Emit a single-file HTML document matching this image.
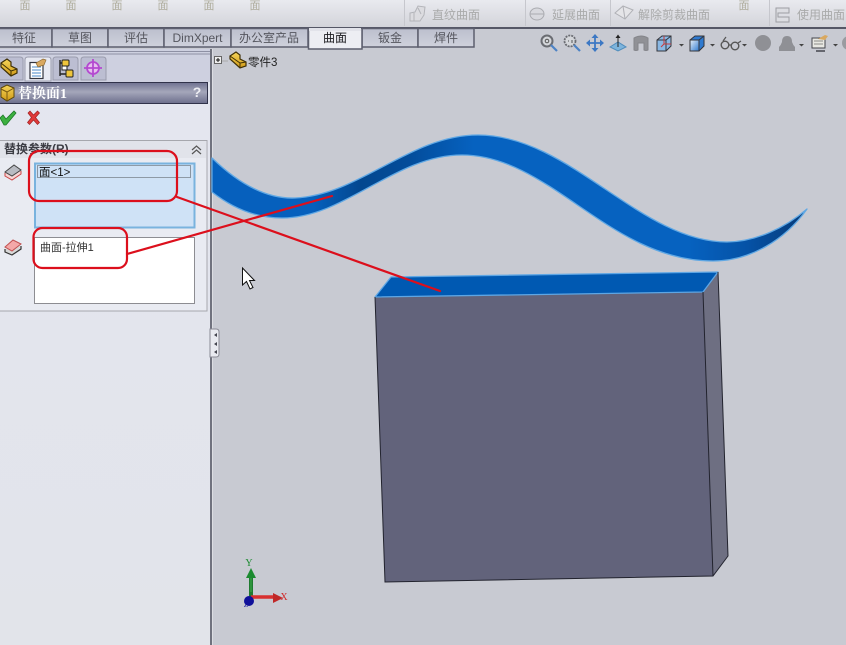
<!DOCTYPE html>
<html><head><meta charset="utf-8"><style>
html,body{margin:0;padding:0;background:#c8cad2}
svg{display:block}
text{font-family:"Liberation Sans","Noto Sans CJK SC",sans-serif}
</style></head><body>
<svg width="846" height="645" viewBox="0 0 846 645" xmlns="http://www.w3.org/2000/svg">
<defs>
<linearGradient id="tb" x1="0" y1="0" x2="0" y2="1"><stop offset="0" stop-color="#e9eaef"/><stop offset="1" stop-color="#d3d4da"/></linearGradient>
<linearGradient id="title" x1="0" y1="0" x2="0" y2="1"><stop offset="0" stop-color="#6f7190"/><stop offset=".45" stop-color="#a5a7ba"/><stop offset="1" stop-color="#6c6e8c"/></linearGradient>
<linearGradient id="tab" x1="0" y1="0" x2="0" y2="1"><stop offset="0" stop-color="#bcbfcd"/><stop offset="1" stop-color="#cfd1dc"/></linearGradient>
<linearGradient id="panel" x1="0" y1="0" x2="0" y2="1"><stop offset="0" stop-color="#e4e6f0"/><stop offset="1" stop-color="#e2e4ea"/></linearGradient>
<linearGradient id="surf" gradientUnits="userSpaceOnUse" x1="212" y1="0" x2="807" y2="0">
<stop offset="0" stop-color="#0660bd"/><stop offset=".17" stop-color="#0660bd"/><stop offset=".25" stop-color="#03478f"/><stop offset=".33" stop-color="#034c9a"/><stop offset=".44" stop-color="#0662c0"/><stop offset=".8" stop-color="#0662c0"/><stop offset=".9" stop-color="#0552a6"/><stop offset="1" stop-color="#063a78"/></linearGradient>
<linearGradient id="yel" x1="0" y1="0" x2="0" y2="1"><stop offset="0" stop-color="#f5d55a"/><stop offset="1" stop-color="#d09a18"/></linearGradient>
<linearGradient id="cube" x1="0" y1="0" x2="1" y2="1"><stop offset="0" stop-color="#e8f0f8"/><stop offset="1" stop-color="#2f7ad0"/></linearGradient>
</defs>

<!-- graphics background -->
<rect width="846" height="645" fill="#c8cad2"/>

<!-- top toolbar -->
<rect width="846" height="27" fill="url(#tb)"/>
<rect y="27" width="846" height="2" fill="#555766"/>
<g font-size="11" fill="#aeac9c" text-anchor="middle">
<text x="25" y="9">面</text><text x="71" y="9">面</text><text x="117" y="9">面</text><text x="163" y="9">面</text><text x="209" y="9">面</text><text x="255" y="9">面</text><text x="744" y="9">面</text>
</g>
<g stroke="#c6c7cd" stroke-width="1"><path d="M404.500 0V26M525.500 0V26M610.500 0V26M769.500 0V26"/></g>
<g font-size="12" fill="#a9aaaa">
<text x="432" y="19">直纹曲面</text><text x="552" y="19">延展曲面</text><text x="638" y="19">解除剪裁曲面</text><text x="797" y="19">使用曲面</text>
</g>
<!-- disabled toolbar icons -->
<path d="M410 21V13l5-1 3-6 7 1-1 8-4 6z" fill="#dcdce0" stroke="#b3b4b9"/>
<path d="M414 13v8M418 8l3 6" stroke="#b3b4b9" fill="none"/>
<ellipse cx="537" cy="14" rx="7" ry="6" fill="#d8d9de" stroke="#aaabb0"/><path d="M530 14h14" stroke="#aaabb0"/>
<path d="M615 13l8-7 10 4-8 9z" fill="#e5e5e8" stroke="#b0b1b6"/><path d="M623 6l2 13" stroke="#b0b1b6"/>
<path d="M776 8h13v5h-11v4h11v5h-13z" fill="#dcdde2" stroke="#9c9da3"/>

<!-- tabs -->
<g stroke="#5d5f6e" stroke-width="1.500" fill="url(#tab)">
<rect x="-2" y="28.500" width="54" height="18.500"/><rect x="52" y="28.500" width="56" height="18.500"/><rect x="108" y="28.500" width="56" height="18.500"/><rect x="164" y="28.500" width="67" height="18.500"/><rect x="231" y="28.500" width="77" height="18.500"/><rect x="362" y="28.500" width="56" height="18.500"/><rect x="418" y="28.500" width="56" height="18.500"/>
</g>
<path d="M308.500 29V49H362V29" fill="#edeef3" stroke="#5d5f6e" stroke-width="1.500"/>
<rect x="309" y="28" width="52" height="3" fill="#e2e3ea"/>
<g font-size="12" fill="#55565e" text-anchor="middle">
<text x="24" y="42">特征</text><text x="80" y="42">草图</text><text x="136" y="42">评估</text><text x="197.500" y="42">DimXpert</text><text x="269" y="42">办公室产品</text><text x="390" y="42">钣金</text><text x="446" y="42">焊件</text>
</g>
<text x="335" y="42" font-size="12" fill="#1c1c20" text-anchor="middle">曲面</text>

<!-- left panel -->
<rect x="0" y="49" width="210" height="596" fill="url(#panel)"/>
<rect x="0" y="49" width="210" height="33" fill="#ced0e0"/>
<path d="M0 51.500H210M0 54H210" stroke="#8e90a4" stroke-width="1"/>
<rect x="210" y="49" width="2" height="596" fill="#70727e"/>
<rect x="212" y="49" width="1" height="596" fill="#dcdde2"/>

<!-- panel tabs -->
<g stroke="#9a9cad" fill="#bcbed2">
<path d="M-2 80V60q0-3 3-3H20q3 0 3 3V80z"/>
<path d="M53 80V60q0-3 3-3H75q3 0 3 3V80z"/>
<path d="M81 80V60q0-3 3-3H103q3 0 3 3V80z"/>
</g>
<path d="M25 81V60q0-3 3-3H48q3 0 3 3V81z" fill="#e7e9f2" stroke="#9a9cad"/>
<!-- feature tree icon -->
<path d="M1 63L7 59L11 62L11 66L17 69L17 73L11 76L1 67Z" fill="url(#yel)" stroke="#3f3006" stroke-width="1.200"/>
<path d="M11 76V71L17 69M1 63L11 71" fill="none" stroke="#3f3006"/>
<!-- property icon -->
<rect x="30" y="62.500" width="13" height="16" fill="#fff" stroke="#33353f" stroke-width="1.200"/>
<path d="M32 67h9M32 70h9M32 73h9M32 76h9" stroke="#4a8ac8"/>
<path d="M36 63l7-4 3 1-2 5-6 2z" fill="#d9a860" stroke="#8d6a32" stroke-width=".7"/>
<!-- config icon -->
<path d="M60 60V76M60 63h3M60 74h6" stroke="#222" fill="none" stroke-width="1.400"/>
<rect x="62" y="60" width="7" height="6" rx="1" fill="#eec53c" stroke="#222"/><rect x="66" y="70" width="7" height="7" rx="1" fill="#eec53c" stroke="#222"/><rect x="62" y="66" width="5" height="4" fill="#fff" stroke="#222"/>
<!-- target icon -->
<circle cx="93" cy="68" r="6" fill="#e6bfee" stroke="#b44ad0" stroke-width="1.800"/>
<path d="M93 59V77M84 68H102" stroke="#b44ad0" stroke-width="1.800"/>

<!-- title bar -->
<rect x="-2" y="82.500" width="209.500" height="21" fill="url(#title)" stroke="#30324a"/>
<path d="M1 88l6-3 7 3v9l-7 4-6-4z" fill="url(#yel)" stroke="#5a4508"/>
<path d="M1 89l6 3 7-4M7 92v9" stroke="#7a5a10" fill="none"/>
<text x="18" y="98" font-size="14" font-weight="bold" fill="#fff" style="font-family:'Liberation Serif','Noto Serif CJK SC',serif">替换面1</text>
<text x="197" y="97" font-size="14" font-weight="bold" fill="#eeeef3" text-anchor="middle">?</text>

<!-- ok / cancel -->
<path d="M0 118L3 115L6 119L14 111L16 113L6 125H4Z" fill="#3cb040" stroke="#1d7a28" stroke-width=".8"/>
<path d="M28 113l2-2 3.500 4 4-4 2 2-4 4.500 4 5-2 2-4-4.500-4 4.500-2-2 4-5z" fill="#e03a3a" stroke="#a02020" stroke-width=".7"/>

<!-- group box -->
<rect x="-2" y="140.500" width="209" height="170.500" fill="#e9ebf2" stroke="#a6a7ad"/>
<rect x="-1" y="141" width="207" height="17" fill="#e1e3ea"/>
<text x="4" y="153" font-size="12" font-weight="bold" fill="#3c3d44">替换参数(R)</text>
<path d="M192 150l4.500-4 4.500 4M192 154l4.500-4 4.500 4" fill="none" stroke="#555" stroke-width="1.200"/>

<!-- selection boxes -->
<rect x="35" y="163.500" width="159.500" height="64" fill="#cfe2f6" stroke="#79b3de" stroke-width="2"/>
<rect x="37.500" y="165.500" width="153" height="12" fill="none" stroke="#222" stroke-width=".8" stroke-dasharray="1 1"/>
<text x="39" y="176" font-size="11.500" fill="#111">面&lt;1&gt;</text>
<rect x="34.500" y="237.500" width="160" height="66" fill="#fff" stroke="#8d8d92"/>
<text x="40" y="251" font-size="11" fill="#333">曲面-拉伸1</text>
<!-- selection icons -->
<path d="M5 173v3l7 4 9-6v-3" fill="#f6d6d6" stroke="#cc4444"/>
<path d="M5 172l9-7 7 5-9 6z" fill="#b9bbc2" stroke="#444"/>
<path d="M5 249v3l7 3 9-6v-3" fill="#d8d8d8" stroke="#333" stroke-width="1.200"/>
<path d="M5 247l8-7 8 4-9 7z" fill="#f4a8a8" stroke="#c05050"/>

<!-- collapse handle -->
<path d="M210 329h6q3 0 3 3v22q0 3-3 3h-6z" fill="#e9eaf0" stroke="#8a8b95"/>
<path d="M217 333l-3 2 3 2zM217 342l-3 2 3 2zM217 350l-3 2 3 2z" fill="#44454f"/>

<!-- tree root -->
<path d="M222 61h6" stroke="#aaa"/>
<rect x="214.500" y="56.500" width="7" height="7" fill="#eee" stroke="#666"/>
<path d="M216 60h4M218 58v4" stroke="#111"/>
<path d="M230 56L236 52L240 55L240 59L246 62L246 66L240 68L230 59Z" fill="url(#yel)" stroke="#3f3006" stroke-width="1.200"/>
<path d="M240 68V63L246 62M230 56L240 63" fill="none" stroke="#3f3006"/>
<text x="248" y="66" font-size="11.500" fill="#222">零件3</text>

<!-- view toolbar -->
<g>
<circle cx="547" cy="41" r="5.500" fill="#d4d6da" stroke="#6a6c72" stroke-width="2"/><circle cx="547" cy="41" r="1.800" fill="none" stroke="#555"/><path d="M551 45l6 6" stroke="#4d82c4" stroke-width="2.200"/>
<circle cx="570" cy="41" r="5.500" fill="#d4d6da" stroke="#6a6c72" stroke-width="1.800" stroke-dasharray="2 1"/><path d="M568 41h1M572 40v3" stroke="#555"/><path d="M574 45l6 6" stroke="#4d82c4" stroke-width="2.200"/>
<path d="M595 36v14M588 43h14" stroke="#3c78c4" stroke-width="1.800"/><path d="M595 34l-3.500 4h7zM595 52l-3.500-4h7zM586 43l4-3.500v7zM604 43l-4-3.500v7z" fill="#3c78c4"/>
<path d="M610 47l8-5 8 5-8 4z" fill="#7db4dc" stroke="#4f8cbc"/><path d="M618 47V36" stroke="#222"/><path d="M618 34.500l-2.500 3.500h5z" fill="#222"/>
<path d="M634 38q7-4 14 0v12q-2 1-4 0v-7h-6v7q-2 1-4 0z" fill="#909196" stroke="#84858a"/>
<path d="M657 40l5-4h9v10l-5 5h-9z" fill="#8ab8e4" stroke="#35363c"/><path d="M657 40h9v11M666 40l5-4" fill="none" stroke="#35363c"/><path d="M664 36v8h7M664 44l-3 3" stroke="#c83a3a" fill="none"/>
<path d="M679 44h5l-2.500 2.500z" fill="#444"/>
<path d="M690 40l5-4h9v10l-5 5h-9z" fill="#2f7ad0" stroke="#35363c"/><path d="M690 40h9v11h-9z" fill="url(#cube)" stroke="#35363c"/><path d="M699 40l5-4" fill="none" stroke="#35363c"/>
<path d="M710 44h5l-2.500 2.500z" fill="#444"/>
<circle cx="725" cy="45" r="3.800" fill="none" stroke="#555" stroke-width="1.400"/><circle cx="735" cy="46" r="3.800" fill="none" stroke="#555" stroke-width="1.400"/><path d="M729 45h2M723 41l3-4M738 43l3-2" stroke="#555" fill="none" stroke-width="1.200"/>
<path d="M742 44h5l-2.500 2.500z" fill="#444"/>
<circle cx="763" cy="43" r="8" fill="#8f9095"/>
<path d="M779 51v-4q2-2 3-5 0-6 5-6t5 6q1 3 3 5v4z" fill="#8f9095"/>
<path d="M799 44h5l-2.500 2.500z" fill="#444"/>
<rect x="812" y="38" width="13" height="10" fill="#e8e8e2" stroke="#44454c"/><path d="M814 41h9M814 44h9" stroke="#8c8c88"/><path d="M818 39l7-4 3 1-3 4z" fill="#d9a860"/><path d="M816 51h9" stroke="#44454c" stroke-width="1.500"/>
<path d="M833 44h5l-2.500 2.500z" fill="#444"/>
<circle cx="849" cy="43" r="7" fill="#9a9ba0"/>
</g>

<!-- surface -->
<path d="M212 158C240 185 268 199 295 198C360 195 410 135 478 135C570 135 640 242 727 242C755 242 785 228 807 209C785 240 750 261 713 261C610 261 550 155 462 155C395 155 345 218 282 218C258 218 235 210 212 192Z" fill="url(#surf)" stroke="#60a8e4" stroke-width="1.300" stroke-linejoin="round"/>

<!-- box -->
<path d="M375 297L703 292L713 576L385 582Z" fill="#62637b"/>
<path d="M703 292L718 272L728 556L713 576Z" fill="#6e6f82"/>
<path d="M375 297L391 277L718 272L703 292Z" fill="#0059b2" stroke="#5ea6e4" stroke-width="1.300" stroke-linejoin="round"/>
<path d="M375 297L385 582L713 576L728 556L718 272M703 292L713 576" fill="none" stroke="#22232e" stroke-width="1"/>

<!-- red annotations -->
<g fill="none" stroke="#dc0f1c" stroke-width="2.200" stroke-linecap="round">
<rect x="29" y="151" width="148" height="50" rx="10"/>
<rect x="33.500" y="228" width="93.500" height="40" rx="9"/>
<path d="M177 197L440 291"/>
<path d="M127 254L332 196"/>
</g>

<!-- cursor -->
<path d="M242.500 268V285L246.500 281.500L250 289L253 287.500L249.500 280.500H254.500Z" fill="#fff" stroke="#111" stroke-width="1"/>

<!-- triad -->
<path d="M251 597V574" stroke="#1f7a30" stroke-width="4"/>
<path d="M251 574V592" stroke="#3cae4a" stroke-width="1"/>
<path d="M251 568l-5 10h10z" fill="#1b8a30"/>
<path d="M251 597H276" stroke="#d83030" stroke-width="3.500"/>
<path d="M283 598l-10-5v10z" fill="#c02828"/>
<circle cx="249" cy="601" r="5" fill="#10109a"/>
<text x="249" y="566" font-size="10" fill="#1b8a30" text-anchor="middle" style="font-family:'Liberation Serif',serif">Y</text>
<text x="284" y="600" font-size="10" fill="#d02828" text-anchor="middle" style="font-family:'Liberation Serif',serif">X</text>
<text x="246" y="607" font-size="7" fill="#10109a" text-anchor="middle" style="font-family:'Liberation Serif',serif">Z</text>
</svg>
</body></html>
